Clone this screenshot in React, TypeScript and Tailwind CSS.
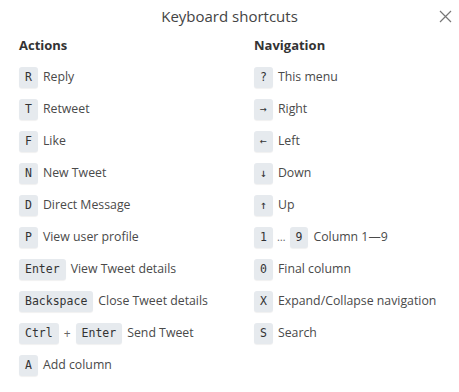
import React from "react";

const Key = ({ children }: { children: React.ReactNode }) => (
  <span className="inline-flex h-[21px] items-center rounded-[3px] bg-[#e6eaee] px-[6px] text-[11.5px] text-[#333] shadow-[0_1px_1px_rgba(0,0,0,0.06)]" style={{ fontFamily: '"DejaVu Sans Mono", "Liberation Mono", monospace' }}>
    {children}
  </span>
);

type Row = { keys: React.ReactNode; label: string };

const actions: Row[] = [
  { keys: <Key>R</Key>, label: "Reply" },
  { keys: <Key>T</Key>, label: "Retweet" },
  { keys: <Key>F</Key>, label: "Like" },
  { keys: <Key>N</Key>, label: "New Tweet" },
  { keys: <Key>D</Key>, label: "Direct Message" },
  { keys: <Key>P</Key>, label: "View user profile" },
  { keys: <Key>Enter</Key>, label: "View Tweet details" },
  { keys: <Key>Backspace</Key>, label: "Close Tweet details" },
  {
    keys: (
      <>
        <Key>Ctrl</Key>
        <span className="px-[5px] text-[12px] text-[#666]">+</span>
        <Key>Enter</Key>
      </>
    ),
    label: "Send Tweet",
  },
  { keys: <Key>A</Key>, label: "Add column" },
];

const nav: Row[] = [
  { keys: <Key>?</Key>, label: "This menu" },
  { keys: <Key>→</Key>, label: "Right" },
  { keys: <Key>←</Key>, label: "Left" },
  { keys: <Key>↓</Key>, label: "Down" },
  { keys: <Key>↑</Key>, label: "Up" },
  {
    keys: (
      <>
        <Key>1</Key>
        <span className="px-[4px] text-[11px] text-[#666]">…</span>
        <Key>9</Key>
      </>
    ),
    label: "Column 1—9",
  },
  { keys: <Key>0</Key>, label: "Final column" },
  { keys: <Key>X</Key>, label: "Expand/Collapse navigation" },
  { keys: <Key>S</Key>, label: "Search" },
];

const Column = ({ title, rows }: { title: string; rows: Row[] }) => (
  <div className="flex flex-col">
    <div className="h-[18px] text-[13px] font-bold leading-[18px] text-[#333]">{title}</div>
    <div className="mt-[13px] flex flex-col gap-[11px]">
      {rows.map((r, i) => (
        <div key={i} className="flex h-[21px] items-center">
          <span className="flex items-center">{r.keys}</span>
          <span className="ml-[5px] text-[12.3px] text-[#4a4a4a]">{r.label}</span>
        </div>
      ))}
    </div>
  </div>
);

export default function App() {
  return (
    <div className="h-[392px] w-[459px] bg-white" style={{ fontFamily: '"Open Sans", "Noto Sans", sans-serif' }}>
      <div className="relative flex h-[32px] items-center justify-center">
        <span className="text-[15px] text-[#444]">Keyboard shortcuts</span>
        <button className="absolute right-[7px] top-[9px] flex h-[14px] w-[14px] items-center justify-center">
          <svg width="13" height="13" viewBox="0 0 13 13">
            <path d="M1 1 L12 12 M12 1 L1 12" stroke="#777" strokeWidth="1.2" fill="none" />
          </svg>
        </button>
      </div>
      <div className="mt-[4px] grid grid-cols-[235px_1fr] pl-[19px]">
        <Column title="Actions" rows={actions} />
        <Column title="Navigation" rows={nav} />
      </div>
    </div>
  );
}
